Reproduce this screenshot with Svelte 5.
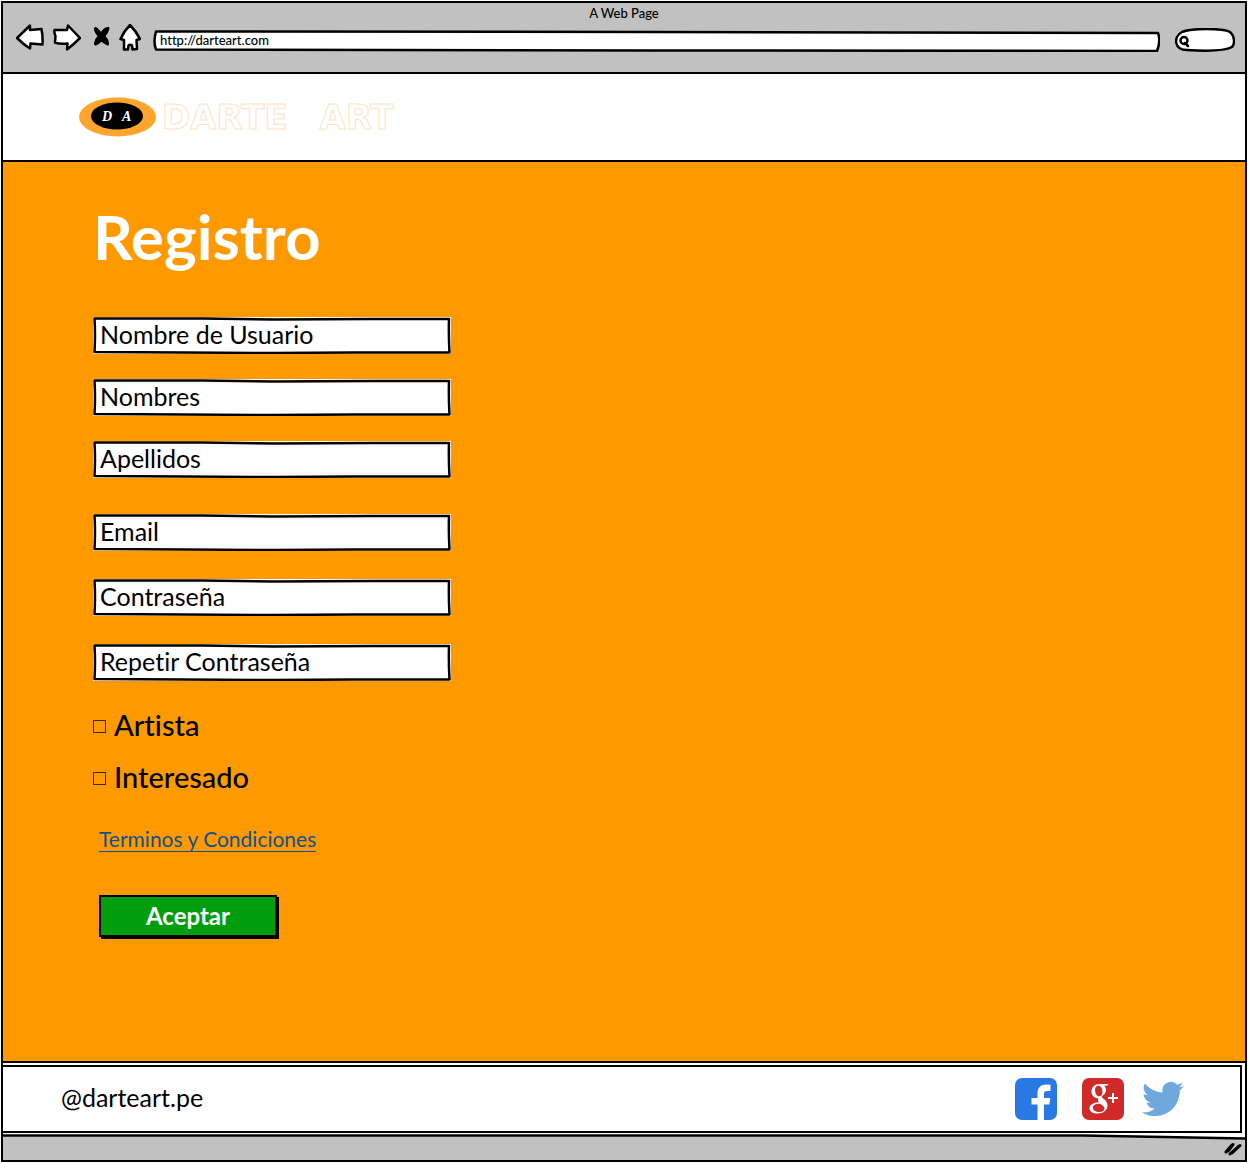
<script>
  const fields = [
    { id: 'usuario', label: 'Nombre de Usuario', type: 'text', space: 'first' },
    { id: 'nombres', label: 'Nombres', type: 'text', space: 'near' },
    { id: 'apellidos', label: 'Apellidos', type: 'text', space: 'near' },
    { id: 'email', label: 'Email', type: 'email', space: 'far' },
    { id: 'clave', label: 'Contraseña', type: 'password', space: 'mid' },
    { id: 'clave2', label: 'Repetir Contraseña', type: 'password', space: 'mid' }
  ];
  const roles = ['Artista', 'Interesado'];
</script>

<div class="page">
  <div class="window">
    <header class="chrome">
      <p class="title">A Web Page</p>
      <div class="toolbar">
        <button class="tool" aria-label="Atrás">
          <svg width="28" height="28" viewBox="0 0 28 28"><path class="ink" d="M1 14 L14 1.500 L14 6 L25.500 5 Q27 13 26.500 20.500 L14.500 19.500 L14 24.500 Q7 20 1 14 Z" /></svg>
        </button>
        <button class="tool" aria-label="Adelante">
          <svg width="28" height="28" viewBox="0 0 28 28"><path class="ink" d="M27 14 L15 1.500 L14 6 L1.500 6 Q1 9 2.500 12 L2 18.500 Q7 20.500 14.500 19.500 L14 25.500 Q20 21 27 14 Z" /></svg>
        </button>
        <button class="tool" aria-label="Detener">
          <svg width="20" height="28" viewBox="0 0 20 28"><path d="M5.500 4.500 Q9 7 11 10.500 Q14 5.500 17.500 4.500 M18 4.500 Q17 9 13.500 12.500 Q17.500 16 17.500 19.500 M17.500 20 Q13.500 18 11.500 15.500 Q8.500 19 5.500 20 M5.500 19 Q6.500 15 9.500 12 Q5.500 8 5.500 4.500 M6.500 5 L17 19 M17.500 5 L6.500 19" fill="none" stroke="#000" stroke-width="3" stroke-linecap="round" /></svg>
        </button>
        <button class="tool" aria-label="Inicio">
          <svg width="22" height="28" viewBox="0 0 22 28"><path class="ink" d="M11 1 Q17 7 21 15 L17.500 16 L18 25 L13.500 25.500 L13 21.500 Q11 20 9.500 21.500 L9 25.500 L5 25.500 L5 16 L1.500 15 Q5 7 11 1 Z" /></svg>
        </button>
        <div class="address">
          <svg class="frame" viewBox="0 0 1006 22" preserveAspectRatio="none" aria-hidden="true"><path class="ink" d="M3 1.500 L500 2 L1004 3 Q1007 11 1003 21 L500 20.500 L3 19.500 Q0 12 3 1.500 Z" /></svg>
          <input aria-label="Dirección" value="http://darteart.com" />
        </div>
        <div class="search">
          <svg class="frame" viewBox="0 0 60 24" preserveAspectRatio="none" aria-hidden="true"><path class="ink" d="M7 4 C16 0 48 0 55 4 C60 8 60 16 57 19 C48 24 28 23 12 22 C-1 22 -2 9 7 4 Z" /><circle cx="9" cy="12.500" r="3.500" fill="none" stroke="#000" stroke-width="2.500" /><path class="line" d="M10 15 L13 18" /></svg>
          <input aria-label="Buscar" />
        </div>
      </div>
    </header>

    <div class="brand">
      <svg width="77" height="40" viewBox="0 0 77 40" aria-hidden="true">
        <ellipse cx="38.500" cy="20" rx="38.500" ry="19.500" fill="#ffa52e" />
        <ellipse cx="38" cy="19" rx="26" ry="13.500" fill="#000" />
        <text class="monogram" x="23" y="24">D</text>
        <text class="monogram" x="43" y="24">A</text>
      </svg>
      <span class="wordmark"><span>DARTE</span><span>ART</span></span>
    </div>

    <main>
      <h1>Registro</h1>
      <form onsubmit={(e) => e.preventDefault()}>
        {#each fields as f}
          <div class="field {f.space}">
            <svg class="frame" viewBox="0 0 358 37" preserveAspectRatio="none" aria-hidden="true">
              <rect width="358" height="37" fill="#fff" />
              <path class="ink" d="M1.500 1.500 L110 1.500 L180 2.500 L280 2 L356 2 Q355.500 18 356.500 35.500 L260 35.500 L180 36 L90 35.500 L1.500 35 Q2.500 18 1.500 1.500 Z" />
            </svg>
            <input id={f.id} type={f.type} placeholder={f.label} aria-label={f.label} />
          </div>
        {/each}
        <div class="roles">
          {#each roles as role}
            <label><input type="checkbox" />{role}</label>
          {/each}
        </div>
        <div class="actions">
          <a href="#terminos">Terminos y Condiciones</a>
          <button class="accept" type="submit">Aceptar</button>
        </div>
      </form>
    </main>

    <div class="foot-wrap">
      <footer>
        <span>@darteart.pe</span>
        <nav aria-label="Redes sociales">
          <a href="#facebook" aria-label="Facebook">
            <svg width="42" height="42" viewBox="0 0 42 42"><rect width="42" height="42" rx="7" fill="#2a78e4" /><path fill="#fff" d="M22.500 42 V26.500 H16.500 V20 H22.500 V15.500 C22.500 9.500 26 6.500 31 6.500 L35.500 6.700 V13 H32 C29.500 13 29 14.200 29 16 V20 H35.300 L34.400 26.500 H29 V42 Z" /></svg>
          </a>
          <a href="#google" aria-label="Google+">
            <svg width="42" height="42" viewBox="0 0 42 42"><rect width="42" height="42" rx="7" fill="#cf2a27" /><path fill="#fff" fill-rule="evenodd" d="M27 6 H17.500 C12.500 6 9.500 9.500 9.500 13.500 C9.500 17.500 12.500 20.300 16.500 20.300 C15.500 22 16 23.200 17 24.200 C11 24.500 7.500 27 7.500 30.200 C7.500 33.500 11 35.500 15.500 35.500 C21.500 35.500 25.500 32 25.500 27.500 C25.500 24 23.500 22.200 21 20.500 C19.500 19.300 19.500 18.500 21 17.300 C22.800 16 24 14.500 24 12 C24 10 23 8.500 22 7.700 H24.500 Z M16.500 7.700 C19 7.700 20.500 11 20.500 14 C20.500 16.700 19.200 18.300 17.200 18.300 C14.500 18.300 13 14.700 13 12 C13 9.500 14.300 7.700 16.500 7.700 Z M18 25.700 C20.500 27.500 22.500 28.500 22.500 30.500 C22.500 32.800 20.500 34 17.500 34 C13.500 34 10.800 32.300 10.800 29.700 C10.800 27 13.500 25.700 18 25.700 Z" /><path d="M31 15 V25 M26 20 H36" stroke="#fff" stroke-width="2" /></svg>
          </a>
          <a href="#twitter" aria-label="Twitter">
            <svg width="42" height="42" viewBox="0 0 24 24"><path fill="#6fa8dc" d="M23.950 4.570a10 10 0 0 1-2.820.77 4.960 4.960 0 0 0 2.160-2.720c-.95.550-2 .95-3.130 1.180a4.920 4.920 0 0 0-8.380 4.480C7.690 8.090 4.070 6.130 1.640 3.160a4.920 4.920 0 0 0 1.520 6.570 4.900 4.900 0 0 1-2.230-.61v.06a4.920 4.920 0 0 0 3.950 4.830 5 5 0 0 1-2.210.08 4.940 4.940 0 0 0 4.600 3.420A9.870 9.870 0 0 1 0 19.540a14 14 0 0 0 7.550 2.210c9.050 0 14-7.500 14-13.980 0-.21 0-.42-.02-.63a9.940 9.940 0 0 0 2.460-2.550z" /></svg>
          </a>
        </nav>
      </footer>
    </div>

    <div class="status">
      <svg class="edge" viewBox="0 0 1242 6" preserveAspectRatio="none" aria-hidden="true"><path d="M0 0 H1242 V4 L1080 1.500 H0 Z" fill="#fff" /><path class="line" d="M0 1.500 L600 1.500 L1080 1.500 L1242 4.500" /></svg>
      <svg class="grip" width="18" height="14" viewBox="0 0 18 14" aria-hidden="true"><path d="M2 10 L8 3 M4 9 L9 2.500 M6 12 L15 4 M8 11 L16 3.500" fill="none" stroke="#000" stroke-width="3" stroke-linecap="round" /></svg>
    </div>
  </div>
</div>

<style>
  :global(body) {
    margin: 0;
    background: #fff;
  }

  .page,
  .page * {
    box-sizing: border-box;
  }

  .page {
    min-height: 100vh;
    display: flex;
    padding: 1px;
    font-family: Lato, 'Open Sans', sans-serif;
    font-weight: 400;
    font-variant-ligatures: none;
    color: #000;
  }

  .window {
    flex: 1;
    min-width: 0;
    display: flex;
    flex-direction: column;
    border: 2px solid #000;
    background: #fff;
  }

  button,
  input {
    font: inherit;
    font-variant-ligatures: none;
    color: inherit;
  }

  svg {
    display: block;
  }

  .ink {
    fill: #fff;
    stroke: #000;
    stroke-width: 2.5px;
    stroke-linejoin: round;
    vector-effect: non-scaling-stroke;
  }

  .line {
    fill: none;
    stroke: #000;
    stroke-width: 2.5px;
    stroke-linecap: round;
    vector-effect: non-scaling-stroke;
  }

  .frame {
    position: absolute;
    inset: 0;
    width: 100%;
    height: 100%;
  }

  .chrome {
    background: #c1c1c1;
    border-bottom: 2px solid #000;
    padding-bottom: 20px;
    font-size: 13px;
    line-height: 20px;
    font-weight: 500;
  }

  .title {
    margin: 0;
    text-align: center;
  }

  .toolbar {
    display: flex;
    align-items: flex-end;
    gap: 9px;
    padding: 1px 10px 0 13px;
  }

  .tool {
    padding: 0;
    border: 0;
    background: none;
  }

  .address,
  .search {
    position: relative;
    height: 22px;
  }

  .address {
    flex: 1;
    margin: 0 6px 0 3px;
  }

  .search {
    width: 60px;
    height: 24px;
  }

  .address input,
  .search input {
    position: relative;
    display: block;
    width: 100%;
    height: 100%;
    padding: 0 7px 2px;
    border: 0;
    background: none;
  }

  .search input {
    padding-left: 18px;
  }

  .brand {
    display: flex;
    align-items: center;
    gap: 6px;
    padding: 23px 76px;
    border-bottom: 2px solid #000;
  }

  .monogram {
    font: italic bold 14px 'Liberation Serif', serif;
    fill: #fff;
  }

  .wordmark {
    display: flex;
    gap: 32px;
    font: bold 34px/40px 'DejaVu Sans', sans-serif;
    color: #fff;
    -webkit-text-stroke: 1px #fce4c8;
  }

  main {
    flex: 1;
    padding: 36px 90px;
    background: #f90;
    border-bottom: 2px solid #000;
  }

  h1 {
    margin: 0;
    color: #fff;
    font-size: 62px;
    line-height: 76px;
    font-weight: 700;
  }

  .field {
    position: relative;
    max-width: 358px;
    height: 37px;
  }

  .first {
    margin-top: 43px;
  }

  .near {
    margin-top: 25px;
  }

  .mid {
    margin-top: 28px;
  }

  .far {
    margin-top: 36px;
  }

  .field input {
    position: relative;
    display: block;
    width: 100%;
    height: 100%;
    padding: 0 7px 4px;
    border: 0;
    background: none;
    font-size: 25px;
  }

  .field input::placeholder {
    color: #000;
    opacity: 1;
  }

  .roles {
    display: grid;
    justify-items: start;
    gap: 16px;
    margin-top: 26px;
  }

  .roles label {
    display: flex;
    align-items: center;
    gap: 8px;
    font-size: 29px;
    line-height: 36px;
    font-weight: 500;
  }

  .roles input {
    appearance: none;
    width: 13px;
    height: 13px;
    margin: 2px 0 0;
    border: 1px solid #3d2600;
  }

  .roles input:checked {
    background: #000;
  }

  .actions {
    display: flex;
    flex-direction: column;
    align-items: flex-start;
    gap: 43px;
    padding-left: 6px;
    margin-top: 32px;
  }

  .actions a {
    border-bottom: 1px solid #11518f;
    color: #11518f;
    font-size: 21px;
    line-height: 24px;
    text-decoration: none;
  }

  .accept {
    width: 178px;
    height: 42px;
    padding: 0;
    border: 2px solid #000;
    background: #009e0f;
    box-shadow: 2px 2px 0 #000;
    color: #fff;
    font-size: 24px;
    line-height: 32px;
    font-weight: 700;
  }

  .foot-wrap {
    padding: 2px 3px 1px 0;
  }

  footer {
    display: flex;
    align-items: flex-start;
    justify-content: space-between;
    padding: 11px 56px 11px 58px;
    border: 2px solid #000;
    border-left: 0;
    font-size: 25px;
    line-height: 38px;
  }

  nav {
    display: flex;
    gap: 25px;
  }

  nav a:last-child {
    margin-left: -7px;
  }

  .status {
    position: relative;
    display: flex;
    justify-content: flex-end;
    padding: 8px 3px 4px;
    background: #c1c1c1;
  }

  .edge {
    position: absolute;
    top: 0;
    left: 0;
    width: 100%;
    height: 6px;
  }
</style>
